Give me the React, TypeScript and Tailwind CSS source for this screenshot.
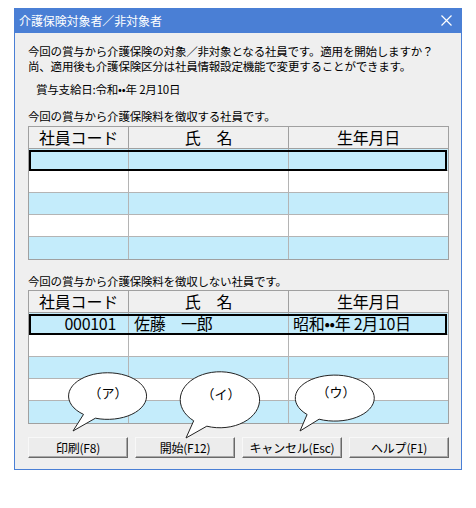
import React from "react";

type Row = { code?: string; name?: string; birth?: string };

const TAKE_ROWS: Row[] = [{}, {}, {}, {}, {}];
const SKIP_ROWS: Row[] = [
  { code: "000101", name: "佐藤　一郎", birth: "昭和••年 2月10日" },
  {},
  {},
  {},
  {},
];

// balloon shape: ellipse with a tail; angles in degrees, 90 = straight down
function balloonPath(
  cx: number,
  cy: number,
  rx: number,
  ry: number,
  a1: number,
  a2: number,
  tip: [number, number]
) {
  const p = (a: number) => {
    const r = (a * Math.PI) / 180;
    return [cx + rx * Math.cos(r), cy + ry * Math.sin(r)].map((v) => v.toFixed(1)).join(",");
  };
  return `M${p(a1)} L${tip[0]},${tip[1]} L${p(a2)} A${rx},${ry} 0 1 0 ${p(a1)} Z`;
}

const BALLOONS = [
  { label: "（ア）", cx: 107.5, cy: 396, rx: 39, ry: 23.3, a1: 128, a2: 108, tip: [73, 431] as [number, number], tx: 108, ty: 392 },
  { label: "（イ）", cx: 219.7, cy: 399.7, rx: 39.7, ry: 28, a1: 131, a2: 109, tip: [186, 438] as [number, number], tx: 221, ty: 393 },
  { label: "（ウ）", cx: 334.5, cy: 398, rx: 39.5, ry: 23, a1: 134, a2: 113, tip: [300, 431] as [number, number], tx: 336, ty: 391 },
];

function Grid({ rows }: { rows: Row[] }) {
  return (
    <div className="w-[421px] border border-[#a0a0a0] bg-white">
      {/* header */}
      <div className="grid h-[22px] grid-cols-[100px_160px_1fr] border-b border-[#a0a0a0] bg-[#f0f0f0] text-[16px] leading-[21px] text-black">
        <div className="border-r border-[#a0a0a0] text-center">社員コード</div>
        <div className="border-r border-[#a0a0a0] text-center">氏　名</div>
        <div className="text-center">生年月日</div>
      </div>
      {rows.map((r, i) => (
        <div
          key={i}
          className={`relative grid h-[22px] grid-cols-[100px_160px_1fr] text-[16px] leading-[21px] tracking-[-0.3px] text-black ${
            i < rows.length - 1 ? "border-b border-[#b4b4b4]" : ""
          } ${i % 2 === 0 ? "bg-[#c4ecfb]" : "bg-white"}`}
        >
          <div className="border-r border-[#b4b4b4] pr-[12px] text-right">{r.code}</div>
          <div className="border-r border-[#b4b4b4] pl-[5px]">{r.name}</div>
          <div className="pl-[4px]">{r.birth}</div>
          {i === 0 && (
            <div className="pointer-events-none absolute top-[1px] -bottom-[1px] left-0 right-[1px] border-2 border-black" />
          )}
        </div>
      ))}
    </div>
  );
}

function Button({ children }: { children: React.ReactNode }) {
  return (
    <button className="h-[21px] w-[100px] border border-t-[#f8f8f8] border-l-[#f8f8f8] border-r-[#696969] border-b-[#696969] bg-[#ececec] text-[12px] leading-[19px] text-black shadow-[inset_-1px_-1px_0_#a8a8a8]">
      {children}
    </button>
  );
}

export default function App() {
  return (
    <div className="relative h-[508px] w-[476px] bg-white pl-[14px] pt-[8px] font-[family-name:'Noto_Sans_CJK_JP',sans-serif]">
      <div className="w-[448px]">
        {/* title bar */}
        <div className="flex h-[25px] items-center justify-between bg-[#4a7fd5] pl-[5px] pr-[10px] text-[12px] tracking-[-0.1px] text-white">
          <span>介護保険対象者／非対象者</span>
          <svg width="11" height="11" viewBox="0 0 11 11">
            <path d="M0.5 0.5 L10.5 10.5 M10.5 0.5 L0.5 10.5" stroke="#fff" strokeWidth="1.2" />
          </svg>
        </div>

        {/* body */}
        <div className="border-x border-b border-[#4a7fd5] bg-[#efefef] pb-[11px] pl-[13px] pt-[11px] text-[11.5px] tracking-[-0.2px] text-black">
          <p className="leading-[15px]">今回の賞与から介護保険の対象／非対象となる社員です。適用を開始しますか？</p>
          <p className="leading-[15px]">尚、適用後も介護保険区分は社員情報設定機能で変更することができます。</p>
          <p className="mt-[8px] pl-[8px] leading-[15px]">賞与支給日:令和••年 2月10日</p>

          <p className="mt-[12px] leading-[15px]">今回の賞与から介護保険料を徴収する社員です。</p>
          <div className="mt-[2px]">
            <Grid rows={TAKE_ROWS} />
          </div>

          <p className="mt-[14px] leading-[15px]">今回の賞与から介護保険料を徴収しない社員です。</p>
          <div className="mt-[1px]">
            <Grid rows={SKIP_ROWS} />
          </div>

          <div className="mt-[13px] flex w-[421px] gap-[7px]">
            <Button>印刷(F8)</Button>
            <Button>開始(F12)</Button>
            <Button>キャンセル(Esc)</Button>
            <Button>ヘルプ(F1)</Button>
          </div>
        </div>
      </div>

      {/* callout balloons over the dialog */}
      <svg className="pointer-events-none absolute left-0 top-0" width="476" height="508" viewBox="0 0 476 508">
        {BALLOONS.map((b) => (
          <g key={b.label}>
            <path
              d={balloonPath(b.cx, b.cy, b.rx, b.ry, b.a1, b.a2, b.tip)}
              fill="#fff"
              stroke="#222"
              strokeWidth="1"
            />
            <text
              x={b.tx}
              y={b.ty}
              textAnchor="middle"
              dominantBaseline="central"
              fontSize="13"
              fontFamily="'Noto Sans CJK JP', sans-serif"
              fill="#000"
            >
              {b.label}
            </text>
          </g>
        ))}
      </svg>
    </div>
  );
}
